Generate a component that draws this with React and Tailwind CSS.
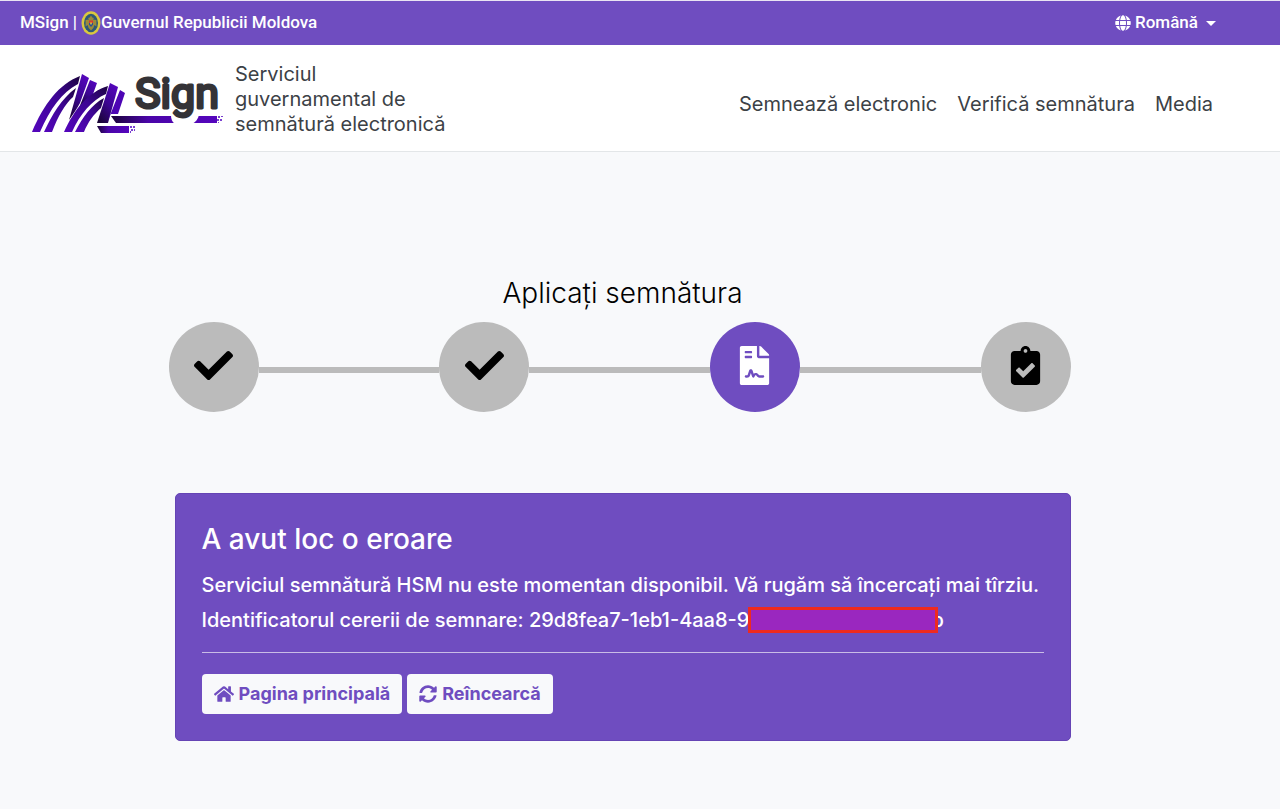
import React from "react";
import { FaCheck, FaClipboardCheck, FaFileContract, FaGlobe, FaHome, FaSyncAlt } from "react-icons/fa";

const steps = [
  { id: "select", label: "Selectare", icon: FaCheck, active: false },
  { id: "auth", label: "Autentificare", icon: FaCheck, active: false },
  { id: "sign", label: "Semnare", icon: FaFileContract, active: true },
  { id: "done", label: "Finalizare", icon: FaClipboardCheck, active: false },
];

const navLinks = ["Semnează electronic", "Verifică semnătura", "Media"];

function CoatOfArms() {
  return (
    <svg width="20" height="24" viewBox="0 0 20 24" aria-hidden="true">
      <ellipse cx="10" cy="12" rx="9.5" ry="11.7" fill="#d9c840" />
      <ellipse cx="10" cy="12" rx="7" ry="9.2" fill="#2c5878" />
      <path d="M10 4.5l1.3 2 1.7.6-1 1.4 3.4.4v6.5l-2-1.4-1 3-2.4 2.6-2.4-2.6-1-3-2 1.4V8.9l3.4-.4-1-1.4 1.7-.6z" fill="#9a8a3a" />
      <path d="M8 9.500h4v2.500H8z" fill="#d8372f" />
      <path d="M8 12h4v1.800L10 16l-2-2.200z" fill="#2a4f98" />
      <path d="M10 10.500l.9 2-.9 1.500-.9-1.500z" fill="#e8c93c" />
    </svg>
  );
}

function Logo() {
  return (
    <svg width="194" height="68" viewBox="0 0 194 68" className="overflow-visible" aria-hidden="true">
      <defs>
        <linearGradient id="leg" x1="0" y1="1" x2="1" y2="0">
          <stop offset="0" stopColor="#5506bd" />
          <stop offset="0.6" stopColor="#3c0592" />
          <stop offset="1" stopColor="#1b033f" />
        </linearGradient>
        <linearGradient id="stem" x1="0.8" y1="0" x2="0.2" y2="1">
          <stop offset="0" stopColor="#5506bd" />
          <stop offset="0.5" stopColor="#3c0592" />
          <stop offset="1" stopColor="#1a0338" />
        </linearGradient>
        <linearGradient id="bar" x1="0" y1="0" x2="1" y2="0">
          <stop offset="0" stopColor="#1a0338" />
          <stop offset="0.35" stopColor="#4a05a8" />
          <stop offset="1" stopColor="#5506bd" />
        </linearGradient>
      </defs>
      <path d="M2 66C14 38 29 18 50 10L48 18C32 26 20 43 10 66z" fill="url(#leg)" />
      <path d="M14 66C22 49 31 33 46 22L43 31C35 38 28 50 22 66z" fill="url(#leg)" />
      <path d="M52 8L59 12L50 37C47 43 43 48 39 54L45 33z" fill="url(#stem)" />
      <path d="M60 14L67 17L62 31C57 34 53 38 49 42z" fill="url(#stem)" />
      <path d="M34 66C44 44 58 26 78 20L76 28C62 34 50 48 42 66z" fill="url(#leg)" />
      <path d="M45 66C53 51 61 39 74 32L71 42C64 48 58 56 54 66z" fill="url(#leg)" />
      <path d="M80 17L88 21L78 57H67z" fill="url(#stem)" />
      <path d="M90 24L95 27L88 48H80L77 57z" fill="#4d05b4" />
      <path d="M67 60H99V67H71z" fill="url(#bar)" />
      <path d="M81 50H187V57H86z" fill="url(#bar)" />
      <path
        d="M100 60h2v2h-2zM103 60h2v2h-2zM101 63h2v2h-2zM104 63h1v2h-1zM100 65h1v2h-1zM188 50h2v2h-2zM191 50h2v1h-2zM187 53h2v2h-2zM190 53h2v2h-2zM188 56h1v1h-1z"
        fill="#7a3fd0"
      />
      {/* gap in the bar round the tail of the g */}
      <path d="M141 49H169C168 53 166 56 162 58H145C142 56 141 53 141 49z" fill="#ffffff" />
      <text
        x="105"
        y="42"
        fontFamily="Roboto, sans-serif"
        fontSize="43"
        fill="#343337"
        stroke="#343337"
        strokeWidth="3"
        strokeLinejoin="round"
      >
        Sign
      </text>
    </svg>
  );
}

function TopBar() {
  return (
    <div className="flex h-[45px] items-center justify-between border-t border-[#e9e4f3] bg-[#6f4dc0] pr-16 pl-5 font-[Roboto,sans-serif] text-[17px] font-medium text-white">
      <div className="flex items-center">
        <span className="mr-1">MSign |</span>
        <CoatOfArms />
        <a href="#guvern">Guvernul Republicii Moldova</a>
      </div>
      <label className="flex items-center">
        <FaGlobe className="mr-1 size-4" aria-hidden="true" />
        <select aria-label="Limba" className="appearance-none bg-transparent outline-none">
          <option>Română</option>
        </select>
        <span className="ml-2 border-x-[5px] border-t-[5px] border-x-transparent border-t-white" />
      </label>
    </div>
  );
}

function Header() {
  return (
    <header className="flex h-[107px] items-center justify-between border-b border-[#e3e6e8] bg-white pt-[3px] pr-[67px] pl-[30px] text-[#3c4146]">
      <a href="#acasa" className="flex items-center gap-[11px]">
        <Logo />
        <span className="w-[220px] text-xl leading-[25px]">
          Serviciul guvernamental de semnătură electronică
        </span>
      </a>
      <nav className="flex gap-5 pt-[9px] text-xl">
        {navLinks.map((item) => (
          <a key={item} href="#nav">{item}</a>
        ))}
      </nav>
    </header>
  );
}

function Stepper() {
  return (
    <ol className="-ml-[6px] flex items-center">
      {steps.map((step, i) => {
        const Icon = step.icon;
        return (
          <React.Fragment key={step.id}>
            {i > 0 ? <li aria-hidden="true" className="mt-[6px] h-[6px] grow bg-[#bbbbbb]" /> : null}
            <li
              aria-label={step.label}
              className={
                step.active
                  ? "flex size-[90px] items-center justify-center rounded-full bg-[#6f4dc0] pb-[3px] text-white"
                  : "flex size-[90px] items-center justify-center rounded-full bg-[#bbbbbb] pb-[3px] text-black"
              }
            >
              <Icon className="size-[39px]" />
            </li>
          </React.Fragment>
        );
      })}
    </ol>
  );
}

function ErrorCard() {
  return (
    <section className="mt-[81px] rounded-[5px] border border-[#6544b4] bg-[#6f4dc0] p-[26px] pt-[27px] text-white">
      <h2 className="text-[28px] leading-9 font-medium">A avut loc o eroare</h2>
      <p className="mt-[15px] text-xl leading-[26px] font-medium">
        Serviciul semnătură HSM nu este momentan disponibil. Vă rugăm să încercați mai tîrziu.
      </p>
      <p className="mt-[9px] flex items-center text-xl leading-[26px] font-medium">
        Identificatorul cererii de semnare: 29d8fea7-1eb1-4aa8-9
        <span className="relative z-10 -mr-[7px] -ml-px h-[26px] w-[190px] border-[3px] border-[#ee2a20] bg-[#9a27bf]" />
        b
      </p>
      <hr className="mt-[19px] border-[#c9bce6]" />
      <div className="mt-[21px] flex gap-[5px] text-lg font-bold text-[#6f4dc0]">
        <button type="button" className="flex h-10 items-center gap-[5px] rounded bg-[#f8f9fb] px-3">
          <FaHome className="size-5" />
          Pagina principală
        </button>
        <button type="button" className="flex h-10 items-center gap-[5px] rounded bg-[#f8f9fb] px-3">
          <FaSyncAlt className="size-[18px]" />
          Reîncearcă
        </button>
      </div>
    </section>
  );
}

export default function App() {
  return (
    <div className="min-h-screen bg-[#f8f9fb] font-[Inter,sans-serif]">
      <TopBar />
      <Header />
      <main className="pr-[35px] pb-16">
        <div className="mx-auto max-w-[896px] pt-[121px]">
          <h1 className="mb-[9px] text-center text-[28px] leading-10 font-light text-black">Aplicați semnătura</h1>
          <Stepper />
          <ErrorCard />
        </div>
      </main>
    </div>
  );
}
